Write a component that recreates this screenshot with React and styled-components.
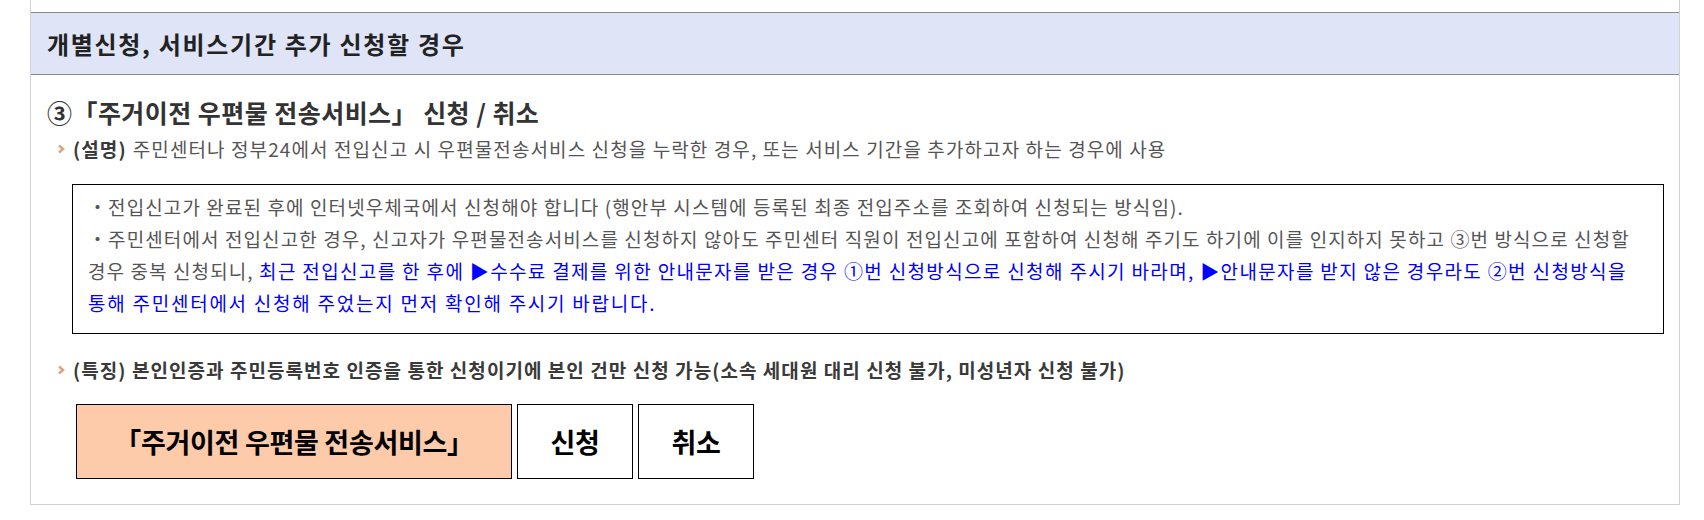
import React from "react";
import styled, { createGlobalStyle } from "styled-components";

const Global = createGlobalStyle`
  html, body { margin: 0; padding: 0; background: #fff; }
  body { font-family: "Noto Sans CJK KR", "Noto Sans", sans-serif; }
`;

const Page = styled.div`
  padding: 0 24px 17px 30px;
`;

const Panel = styled.section`
  border: 1px solid #d2d2d2;
  border-top: none;
  padding: 12px 0 25px;
`;

const Header = styled.h2`
  margin: 0;
  height: 61px;
  display: flex;
  align-items: center;
  padding-left: 16px;
  background: #dfe5f7;
  border-top: 1px solid #8a8a8a;
  border-bottom: 1px solid #8a8a8a;
  font-size: 24px;
  font-weight: 700;
  letter-spacing: 1.7px;
  color: #222;
`;

const Body = styled.div`
  padding: 21px 15px 0 16px;
`;

const Title = styled.h3`
  margin: 0;
  font-size: 25px;
  line-height: 32px;
  font-weight: 700;
  letter-spacing: 0.45px;
  color: #333;
`;

const Point = styled.p`
  margin: ${(p) => p.$mt}px 0 0;
  display: flex;
  align-items: center;
  gap: 8px;
  padding-left: 10px;
  font-size: 19px;
  line-height: 26px;
  letter-spacing: ${(p) => (p.$bold ? "1.05px" : "1.1px")};
  color: ${(p) => (p.$bold ? "#3a3a3a" : "#555")};
  font-weight: ${(p) => (p.$bold ? 700 : 400)};
  white-space: nowrap;
`;

const Label = styled.b`
  font-weight: 700;
  color: #3a3a3a;
  margin-right: 6px;
`;

const Chevron = styled.svg`
  flex: none;
  width: 8px;
  height: 10px;
`;

const NoteBox = styled.div`
  margin: 22px 0 0 25px;
  border: 1px solid #000;
  padding: 6px 15px 14px 15px;
  font-size: 19px;
  line-height: 32px;
  letter-spacing: 1.1px;
  color: #555;
`;

const NoteLine = styled.p`
  margin: 0;
  white-space: nowrap;
`;

const Blue = styled.span`
  color: #0000ff;
  letter-spacing: ${(p) => (p.$wide ? "1.75px" : "1.35px")};
`;

const Buttons = styled.div`
  display: flex;
  gap: 5px;
  margin: 21px 0 0 29px;
`;

const Btn = styled.a`
  box-sizing: border-box;
  display: flex;
  align-items: center;
  justify-content: center;
  height: 75px;
  width: ${(p) => p.$w}px;
  border: 1px solid #000;
  background: ${(p) => (p.$accent ? "#fecbaa" : "#fff")};
  color: #000;
  font-size: 27px;
  font-weight: 700;
  letter-spacing: -0.3px;
  text-decoration: none;
`;

const Arrow = () => (
  <Chevron viewBox="0 0 8 10">
    <polyline points="2,1.5 6,5 2,8.5" fill="none" stroke="#dba582" strokeWidth="2.6" />
  </Chevron>
);

export default function App() {
  return (
    <Page>
      <Global />
      <Panel>
        <Header>개별신청, 서비스기간 추가 신청할 경우</Header>
        <Body>
          <Title>③「주거이전 우편물 전송서비스」 신청 / 취소</Title>
          <Point $mt={8}>
            <Arrow />
            <span>
              <Label>(설명)</Label>주민센터나 정부24에서 전입신고 시 우편물전송서비스 신청을 누락한 경우, 또는 서비스 기간을 추가하고자 하는 경우에 사용
            </span>
          </Point>
          <NoteBox>
            <NoteLine>・전입신고가 완료된 후에 인터넷우체국에서 신청해야 합니다 (행안부 시스템에 등록된 최종 전입주소를 조회하여 신청되는 방식임).</NoteLine>
            <NoteLine>・주민센터에서 전입신고한 경우, 신고자가 우편물전송서비스를 신청하지 않아도 주민센터 직원이 전입신고에 포함하여 신청해 주기도 하기에 이를 인지하지 못하고 ③번 방식으로 신청할</NoteLine>
            <NoteLine>
              경우 중복 신청되니, <Blue>최근 전입신고를 한 후에 ▶수수료 결제를 위한 안내문자를 받은 경우 ①번 신청방식으로 신청해 주시기 바라며, ▶안내문자를 받지 않은 경우라도 ②번 신청방식을</Blue>
            </NoteLine>
            <NoteLine>
              <Blue $wide>통해 주민센터에서 신청해 주었는지 먼저 확인해 주시기 바랍니다.</Blue>
            </NoteLine>
          </NoteBox>
          <Point $mt={23} $bold>
            <Arrow />
            <span>(특징) 본인인증과 주민등록번호 인증을 통한 신청이기에 본인 건만 신청 가능(소속 세대원 대리 신청 불가, 미성년자 신청 불가)</span>
          </Point>
          <Buttons>
            <Btn $w={436} $accent>「주거이전 우편물 전송서비스」</Btn>
            <Btn $w={116}>신청</Btn>
            <Btn $w={116}>취소</Btn>
          </Buttons>
        </Body>
      </Panel>
    </Page>
  );
}
